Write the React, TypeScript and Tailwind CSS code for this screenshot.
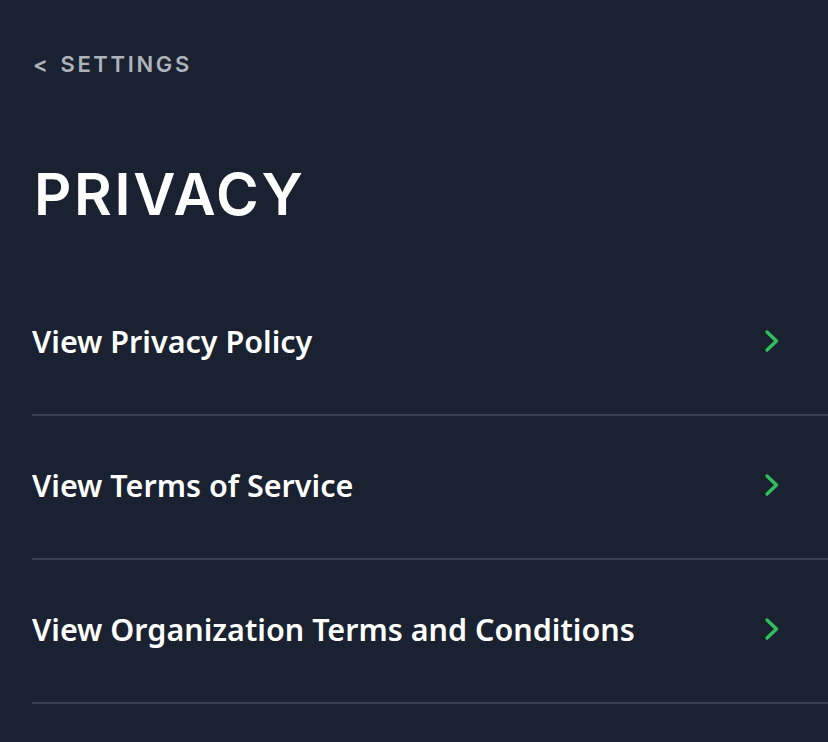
const items = [
  "View Privacy Policy",
  "View Terms of Service",
  "View Organization Terms and Conditions",
];

function Chevron() {
  return (
    <svg width="20" height="26" viewBox="0 0 20 26" fill="none">
      <path
        d="M5 4 L14.5 13 L5 22"
        stroke="#2fbf5b"
        strokeWidth="3.4"
        strokeLinecap="round"
        strokeLinejoin="round"
      />
    </svg>
  );
}

export default function App() {
  return (
    <div className="min-h-[742px] w-full bg-[#1a2130] pl-8 pt-[48px] font-['Noto_Sans',sans-serif] text-white">
      <div className="flex h-[32px] items-center gap-[10px] pl-[1px] font-['Inter',sans-serif] text-[22px] font-semibold tracking-[0.12em] text-[#aeb3bb]">
        <span>&lt;</span>
        <span>SETTINGS</span>
      </div>

      <h1 className="mt-[84px] pl-[2px] font-['Inter',sans-serif] text-[58px] font-semibold leading-[60px] tracking-[0.045em]">
        PRIVACY
      </h1>

      <ul className="mt-[48px]">
        {items.map((label) => (
          <li
            key={label}
            className="flex h-[144px] items-center justify-between border-b-2 border-[#394150] pb-[4px] pr-[46px]"
          >
            <span className="text-[30.5px] font-semibold leading-none">{label}</span>
            <Chevron />
          </li>
        ))}
      </ul>
    </div>
  );
}
